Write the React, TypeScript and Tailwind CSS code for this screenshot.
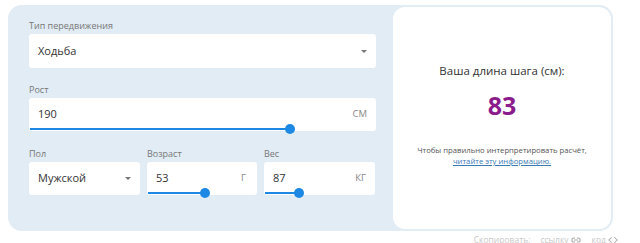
import { Link2, Code } from "lucide-react";

function Slider({ pct }: { pct: number }) {
  return (
    <div className="absolute left-[1px] right-[1px] bottom-[1px] h-[2px]">
      <div className="absolute left-0 top-0 h-[2px] bg-[#1e88e5]" style={{ width: `${pct}%` }} />
      <div
        className="absolute top-[-4px] w-[10px] h-[10px] rounded-full bg-[#1e88e5] -ml-[5px]"
        style={{ left: `${pct}%` }}
      />
    </div>
  );
}

function Caret() {
  return <span className="w-0 h-0 border-l-[3px] border-r-[3px] border-t-[3px] border-l-transparent border-r-transparent border-t-[#777]" />;
}

function Field({ label, children, className = "" }: { label: string; children: React.ReactNode; className?: string }) {
  return (
    <div className={className}>
      <div className="text-[9px] leading-[12px] text-[#777] mb-[2px]">{label}</div>
      {children}
    </div>
  );
}

export default function App() {
  return (
    <div className="w-[640px] h-[243px] bg-white overflow-hidden pt-[5px] pl-[8px]" style={{ fontFamily: '"Open Sans", sans-serif' }}>
      <div className="w-[605px] h-[226px] bg-[#e1ecf4] rounded-[14px] flex p-[2px]">
        <div className="flex-1 pl-[19px] pr-[17px] pt-[13px]">
          <Field label="Тип передвижения">
            <div className="h-[34px] bg-white rounded-[3px] flex items-center justify-between pl-[9px] pr-[9px]">
              <span className="text-[11px] text-[#333]">Ходьба</span>
              <Caret />
            </div>
          </Field>
          <Field label="Рост" className="mt-[16px]">
            <div className="relative h-[33px] bg-white rounded-[3px] flex items-center justify-between pl-[9px] pr-[9px]">
              <span className="text-[11px] text-[#333]">190</span>
              <span className="text-[9.5px] text-[#888]">СМ</span>
              <Slider pct={75.5} />
            </div>
          </Field>
          <div className="flex gap-[7px] mt-[17px]">
            <Field label="Пол" className="w-[111px]">
              <div className="h-[33px] bg-white rounded-[3px] flex items-center justify-between pl-[9px] pr-[9px]">
                <span className="text-[11px] text-[#333]">Мужской</span>
                <Caret />
              </div>
            </Field>
            <Field label="Возраст" className="w-[110px]">
              <div className="relative h-[33px] bg-white rounded-[3px] flex items-center justify-between pl-[9px] pr-[11px]">
                <span className="text-[11px] text-[#333]">53</span>
                <span className="text-[9.5px] text-[#888]">Г</span>
                <Slider pct={53} />
              </div>
            </Field>
            <Field label="Вес" className="w-[111px]">
              <div className="relative h-[33px] bg-white rounded-[3px] flex items-center justify-between pl-[9px] pr-[9px]">
                <span className="text-[11px] text-[#333]">87</span>
                <span className="text-[9.5px] text-[#888]">КГ</span>
                <Slider pct={31} />
              </div>
            </Field>
          </div>
        </div>
        <div className="w-[218px] bg-white rounded-[12px] flex flex-col items-center pt-[55px]">
          <div className="text-[11.5px] text-[#333] leading-[17px]">Ваша длина шага (см):</div>
          <div className="text-[25px] font-bold text-[#8b1c8c] leading-[30px] mt-[11px]">83</div>
          <div className="text-[7.7px] text-[#555] leading-[11px] mt-[25px] text-center">
            Чтобы правильно интерпретировать расчёт,
            <br />
            <a className="text-[#3a7ab5] underline">читайте эту информацию.</a>
          </div>
        </div>
      </div>
      <div className="flex justify-end items-center gap-[2px] pr-[22px] mt-[3px] text-[8.5px] text-[#c8c8c8] leading-[12px]">
        <span className="mr-[8px]">Скопировать:</span>
        <span>ссылку</span>
        <Link2 size={10} strokeWidth={2.5} className="text-[#aaa] mr-[9px]" />
        <span>код</span>
        <Code size={10} strokeWidth={2.5} className="text-[#aaa]" />
      </div>
    </div>
  );
}
